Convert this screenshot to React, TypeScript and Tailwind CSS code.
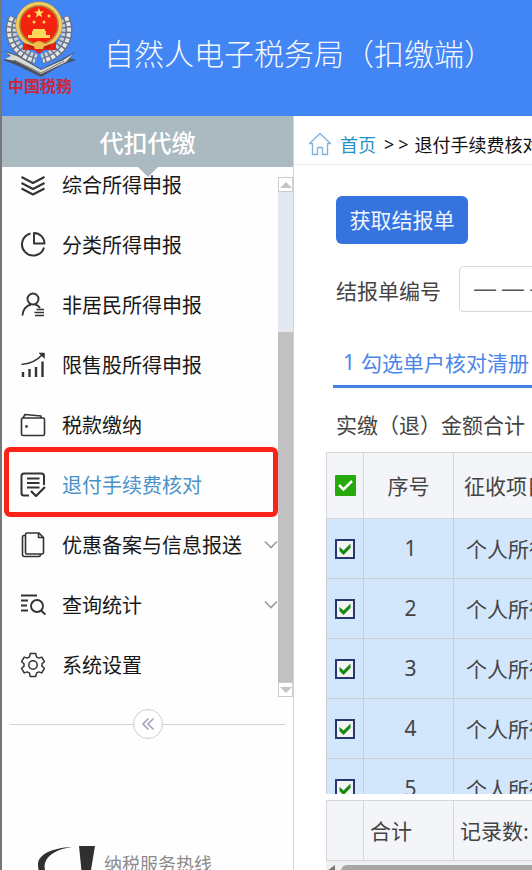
import React from "react";

type IconProps = { children: React.ReactNode };

function Glyph({ children }: IconProps) {
  return (
    <svg
      viewBox="0 0 26 26"
      className="h-[26px] w-[26px] shrink-0"
      fill="none"
      stroke="currentColor"
      strokeWidth="1.6"
      strokeLinejoin="round"
      aria-hidden="true"
    >
      {children}
    </svg>
  );
}

const gear =
  "M10.2 1.6h5.6l.7 3.2 2.2 1.3 3.1-1 2.6 4.6-2.4 2.1v2.4l2.4 2.1-2.6 4.6-3.1-1-2.2 1.3-.7 3.2h-5.6l-.7-3.2-2.2-1.3-3.1 1-2.6-4.6L4 14.2v-2.4L1.6 9.7l2.6-4.6 3.1 1 2.2-1.3z";

const menu = [
  {
    label: "综合所得申报",
    icon: (
      <Glyph>
        <path d="M1.500 5 13 11 24.500 5M1.500 11 13 17 24.500 11M1.500 16.500 13 22.500 24.500 16.500" strokeWidth="2" />
      </Glyph>
    ),
  },
  {
    label: "分类所得申报",
    icon: (
      <Glyph>
        <path d="M10.500 1.500A11.200 11.200 0 1 0 24 15.500" strokeWidth="2" />
        <path d="M14 1A10.500 10.500 0 0 1 24.500 11.500H14z" strokeWidth="1.900" />
      </Glyph>
    ),
  },
  {
    label: "非居民所得申报",
    icon: (
      <Glyph>
        <circle cx="13" cy="7" r="5.500" strokeWidth="1.900" />
        <path d="M2.500 23.500C2.500 18 6 13.500 11 12.500M15 12.500q3.500 .8 5 3.500" strokeWidth="1.900" />
        <path d="M16.500 17.500H24M14.500 20.500H24M15 23.500h9" />
      </Glyph>
    ),
  },
  {
    label: "限售股所得申报",
    icon: (
      <Glyph>
        <path d="M1.500 12.500C10 12 17 8.500 22.500 2.500" />
        <path d="M19 1h5.500v5.500z" fill="currentColor" strokeWidth="0.500" />
        <path d="M3 20v5M9.500 17v8M16 15v10M22.500 9.500V25" strokeWidth="2.400" />
      </Glyph>
    ),
  },
  {
    label: "税款缴纳",
    icon: (
      <Glyph>
        <rect x="1.500" y="6" width="23" height="17.500" rx="1.500" />
        <path d="M3 6 5 2.500l16 1.500v2" />
        <circle cx="6.500" cy="14.500" r=".6" />
      </Glyph>
    ),
  },
  {
    label: "退付手续费核对",
    active: true,
    icon: (
      <Glyph>
        <path d="M9 23.500H4Q1.500 23.500 1.500 21V4Q1.500 1.500 4 1.500h17.500Q24 1.500 24 4v9" strokeWidth="2" />
        <path d="M7 6.500h12.500M7 11h12.500M7 15.500h12.500" strokeWidth="2.200" />
        <path d="m11 19 5 5 9-9" strokeWidth="2.200" />
      </Glyph>
    ),
  },
  {
    label: "优惠备案与信息报送",
    expandable: true,
    icon: (
      <Glyph>
        <path d="M7 1h12L23.500 5.500v15q0 1.500-1.500 1.500H7q-1.500 0-1.500-1.500v-18Q5.500 1 7 1zM18.500 1v4.500h5" />
        <path d="M5.500 3.500H4Q2.500 3.500 2.500 5v17.500q0 2 2 2H19q1.500 0 1.500-2.500" />
      </Glyph>
    ),
  },
  {
    label: "查询统计",
    expandable: true,
    icon: (
      <Glyph>
        <path d="M1 3.500h16M1 8.500h7M1 13.500h6M1 18.500h7" strokeWidth="1.900" />
        <circle cx="17" cy="14" r="6" strokeWidth="1.900" />
        <path d="m21 18.500 4.500 4" strokeWidth="1.900" />
      </Glyph>
    ),
  },
  {
    label: "系统设置",
    icon: (
      <Glyph>
        <path d={gear} strokeWidth="1.500" />
        <circle cx="13" cy="13" r="4.200" strokeWidth="1.500" />
      </Glyph>
    ),
  },
];

function Emblem() {
  return (
    <svg viewBox="2 0 76 80" className="h-20 w-[76px]" aria-hidden="true">
      <g fill="none">
        <path d="M14 17C6 32 12 53 36 59M64 17C72 32 66 53 42 59" stroke="#66738a" strokeWidth="10" />
        <path d="M12 17C4 34 12 54 35 61M66 17C74 34 66 54 43 61" stroke="#e3e5e6" strokeWidth="4" strokeDasharray="4 1.500" />
        <path d="M17 20C10 34 18 51 37 56M61 20C68 34 60 51 41 56" stroke="#c9ced3" strokeWidth="4" strokeDasharray="3 1.500" />
      </g>
      <path d="M4 51 17 55 41 69 62 59 75 52 70 58 76 60 62 65 41 77 16 65 3 60 10 57z" fill="#4c5360" />
      <path d="m5 52 12 4 24 14 22-10 10-6-7 8-25 12-25-13-11-2 6-3z" fill="#dadad5" />
      <path d="m14 60 27 13 23-12" stroke="#777" fill="none" />
      <path d="M23 38v12h11l5 4 5-4h12V38z" fill="#e32215" />
      <circle cx="39" cy="25" r="23.500" fill="#b38b32" />
      <circle cx="39" cy="25" r="21.500" fill="none" stroke="#f1cd66" strokeWidth="3" />
      <circle cx="39" cy="25" r="18.500" fill="#f62210" />
      <path d="m39 8 1.300 3.500H44l-3 2.300 1.200 3.700-3.200-2.200-3.200 2.200 1.200-3.700-3-2.300h3.700z" fill="#ffe56b" />
      <g fill="#ffd75a">
        <circle cx="29" cy="16" r="1.500" />
        <circle cx="49" cy="16" r="1.500" />
        <circle cx="34" cy="22" r="1.500" />
        <circle cx="44" cy="22" r="1.500" />
        <path d="M32 31h1v-2h12v2h1v4h4v3H28v-3h4z" />
      </g>
      <path d="M25 43q14 7 28 0l-5 6H30z" fill="#c4200f" />
      <path d="M33 44q6-6 12 0l-2 5h-8z" fill="#efbd4a" />
    </svg>
  );
}

function HomeIcon() {
  return (
    <svg viewBox="0 0 24 24" className="h-6 w-6 shrink-0" fill="none" stroke="#7fb2dc" strokeWidth="1.400" strokeLinejoin="round" aria-hidden="true">
      <path d="M4.500 11.500H1.500L12 1.500l10.500 10H19.500v11h-5v-7h-5v7h-5z" />
    </svg>
  );
}

function Sidebar() {
  return (
    <aside className="flex w-[292px] shrink-0 flex-col border-r border-[#d5d5d8] bg-[#fefefe]">
      <h2 className="relative flex h-[51px] shrink-0 items-center justify-center bg-[#abb9c1] text-2xl font-medium text-white">
        代扣代缴
        <svg viewBox="0 0 22 11" className="absolute left-[135px] top-[50px] h-[11px] w-[22px]" aria-hidden="true">
          <path d="M0 0h22L11 11z" fill="#abb9c1" />
        </svg>
      </h2>
      <div className="flex h-[530px] shrink-0">
        <nav className="min-w-0 flex-1 overflow-hidden">
          <ul className="-mt-3">
            {menu.map((item) => (
              <li key={item.label} className="relative">
                <button className="flex h-[60px] w-full items-center pl-[18px] text-left text-xl">
                  <span className="text-[#333]">{item.icon}</span>
                  <span className={item.active ? "ml-4 flex-1 whitespace-nowrap text-[#4a91c9]" : "ml-4 flex-1 whitespace-nowrap text-[#181818]"}>
                    {item.label}
                  </span>
                  {item.expandable && (
                    <svg viewBox="0 0 14 10" className="h-[10px] w-[14px] shrink-0" fill="none" stroke="#9a9a9a" strokeWidth="1.600" aria-hidden="true">
                      <path d="m1 1.500 6 6 6-6" />
                    </svg>
                  )}
                </button>
                {item.active && (
                  <span className="pointer-events-none absolute -top-2 left-[2px] right-0 h-[70px] rounded-md border-[5px] border-[#fa2317]" />
                )}
              </li>
            ))}
          </ul>
        </nav>
        <div className="mt-[10px] flex w-[15px] shrink-0 flex-col bg-[#e4e8f1]">
          <span className="flex h-[15px] items-center justify-center border border-[#ccc] bg-white">
            <svg viewBox="0 0 12 6" className="h-[6px] w-3" aria-hidden="true"><path d="M0 6 6 0l6 6z" fill="#c4c4c4" /></svg>
          </span>
          <span className="mt-[140px] flex-1 bg-[#c1c1c1]" />
          <span className="flex h-[15px] items-center justify-center border border-[#ccc] bg-white">
            <svg viewBox="0 0 12 6" className="h-[6px] w-3" aria-hidden="true"><path d="M0 0h12L6 6z" fill="#c4c4c4" /></svg>
          </span>
        </div>
      </div>
      <div className="mt-3 flex shrink-0 items-center px-2">
        <span className="h-px flex-1 bg-[#d3d4d7]" />
        <button aria-label="收起" className="flex h-[30px] w-[30px] items-center justify-center rounded-full border border-[#cbccd2] bg-white">
          <svg viewBox="0 0 14 14" className="h-[14px] w-[14px]" fill="none" stroke="#a3a6c0" strokeWidth="1.700" aria-hidden="true">
            <path d="M7.500 1.500 2 7l5.500 5.500M12.500 1.500 7 7l5.500 5.500" />
          </svg>
        </button>
        <span className="h-px flex-1 bg-[#d3d4d7]" />
      </div>
      <div className="mt-[106px] flex items-start pl-9">
        <svg viewBox="0 0 58 54" className="h-[54px] w-[58px] shrink-0" fill="#303030" aria-hidden="true">
          <path d="M34 2C14 3 0 9 0 20s8 16 20 18C10 33 5 26 7 18 10 9 20 4 34 2zM41 1h16l-5 30h-8z" />
        </svg>
        <p className="ml-2 mt-1 whitespace-nowrap text-lg text-[#8b8b8b]">纳税服务热线</p>
      </div>
    </aside>
  );
}

function RowCheck({ n }: { n: number }) {
  return (
    <label className="relative ml-2 block h-5 w-5">
      <input type="checkbox" defaultChecked aria-label={"选择第" + n + "行"} className="block h-5 w-5 appearance-none border-2 border-[#27376f] bg-[#f2f3f3]" />
      <svg viewBox="0 0 20 20" className="pointer-events-none absolute inset-0 h-5 w-5" aria-hidden="true">
        <path d="M4.500 8v4L8.500 16 15.500 9V4.500L8.500 11.500z" fill="#14880f" />
      </svg>
    </label>
  );
}

const rows = [1, 2, 3, 4, 5];

function Columns() {
  return (
    <colgroup>
      <col className="w-[37px]" />
      <col className="w-[90px]" />
      <col className="w-[150px]" />
    </colgroup>
  );
}

export default function App() {
  return (
    <div className="flex h-screen flex-col overflow-hidden border-l-2 border-[#77777b] bg-white font-['Noto_Sans_CJK_SC',sans-serif]">
      <header className="flex h-[116px] shrink-0 items-center bg-[#4285f5]">
        <div className="w-[102px] shrink-0 self-start">
          <Emblem />
          <p className="-mt-[3px] pl-[6px] font-['Liberation_Serif','Noto_Sans_CJK_SC',serif] text-base font-bold leading-5 text-[#c52b3d]">
            中国税務
          </p>
        </div>
        <h1 className="-mt-3 whitespace-nowrap text-[30px] font-light text-[#f4f9ff]">自然人电子税务局（扣缴端）</h1>
      </header>
      <div className="flex min-h-0 flex-1">
        <Sidebar />
        <main className="flex min-w-0 flex-1 flex-col overflow-hidden whitespace-nowrap text-[21px] text-[#444]">
          <nav className="flex h-[49px] shrink-0 items-center border-b border-[#ececef] pl-[14px] pt-[7px] text-lg text-[#111]">
            <HomeIcon />
            <a href="#home" className="ml-2 text-[#2590c9]">首页</a>
            <span className="ml-2 flex gap-1 font-['Noto_Sans']"><span>&gt;</span><span>&gt;</span></span>
            <span className="ml-[6px]">退付手续费核对</span>
          </nav>
          <div className="shrink-0 pl-[42px] pt-[31px]">
            <button className="h-12 w-[132px] rounded-md bg-[#3573de] text-[#eef5ff]">获取结报单</button>
          </div>
          <div className="mt-[22px] flex shrink-0 items-center pl-[42px]">
            <label htmlFor="report-no" className="pt-1">结报单编号</label>
            <input id="report-no" defaultValue="— — — —" className="ml-[18px] h-[46px] w-60 shrink-0 rounded border border-[#d8d8da] bg-white px-[14px] font-['Liberation_Sans'] text-[22px] text-[#555] outline-none" />
          </div>
          <div className="ml-[39px] mt-[29px] flex shrink-0 border-b-[3px] border-[#4284e6]">
            <button className="flex h-11 items-center gap-[6px] pl-[10px] text-[#4d86ea]"><span className="font-['Noto_Sans']">1</span><span>勾选单户核对清册</span></button>
          </div>
          <p className="mt-5 shrink-0 pl-[42px] leading-8">实缴（退）金额合计</p>
          <div className="ml-8 mt-3 h-[342px] shrink-0 overflow-hidden">
            <table className="w-[277px] table-fixed border-collapse">
              <Columns />
              <thead>
                <tr className="h-[66px] bg-[#f4f5f8]">
                  <th className="border border-[#d5d7d8] p-0">
                    <label className="relative mx-auto block h-[21px] w-[21px]">
                      <input type="checkbox" defaultChecked aria-label="全选" className="block h-[21px] w-[21px] appearance-none rounded-[1px] bg-[#25a90b]" />
                      <svg viewBox="0 0 21 21" className="pointer-events-none absolute inset-0 h-[21px] w-[21px]" fill="none" stroke="white" strokeWidth="2.600" aria-hidden="true"><path d="m4 10 4.500 4.500L17 6" /></svg>
                    </label>
                  </th>
                  <th className="border border-[#d5d7d8] p-0 font-normal">序号</th>
                  <th className="border border-[#d5d7d8] p-0 pl-[10px] text-left font-normal">征收项目</th>
                </tr>
              </thead>
              <tbody>
                {rows.map((n) => (
                  <tr key={n} className="h-[60px] bg-[#d2e7fc]">
                    <td className="border border-[#cccfd0] p-0"><RowCheck n={n} /></td>
                    <td className="border border-[#cccfd0] p-0 pl-1 text-center font-['Noto_Sans']">{n}</td>
                    <td className="border border-[#cccfd0] p-0 pl-3">个人所得税</td>
                  </tr>
                ))}
              </tbody>
            </table>
          </div>
          <div className="ml-8 mt-[6px] shrink-0">
            <table className="w-[277px] table-fixed border-collapse">
              <Columns />
              <tbody>
                <tr className="h-[60px] bg-[#f4f5f8]">
                  <td className="border border-[#d5d7d8]" />
                  <td className="border border-[#d5d7d8] p-0 pl-[6px]">合计</td>
                  <td className="border border-[#d5d7d8] p-0 pl-[6px]">记录数:</td>
                </tr>
              </tbody>
            </table>
            <div className="flex h-4 items-center bg-[#f0f0f0] pt-1">
              <svg viewBox="0 0 8 12" className="ml-px h-3 w-2 shrink-0" aria-hidden="true"><path d="M8 0v12L0 6z" fill="#777" /></svg>
              <span className="ml-[6px] h-3 flex-1 rounded-l-md bg-[#a6a6a6]" />
            </div>
          </div>
        </main>
      </div>
    </div>
  );
}
